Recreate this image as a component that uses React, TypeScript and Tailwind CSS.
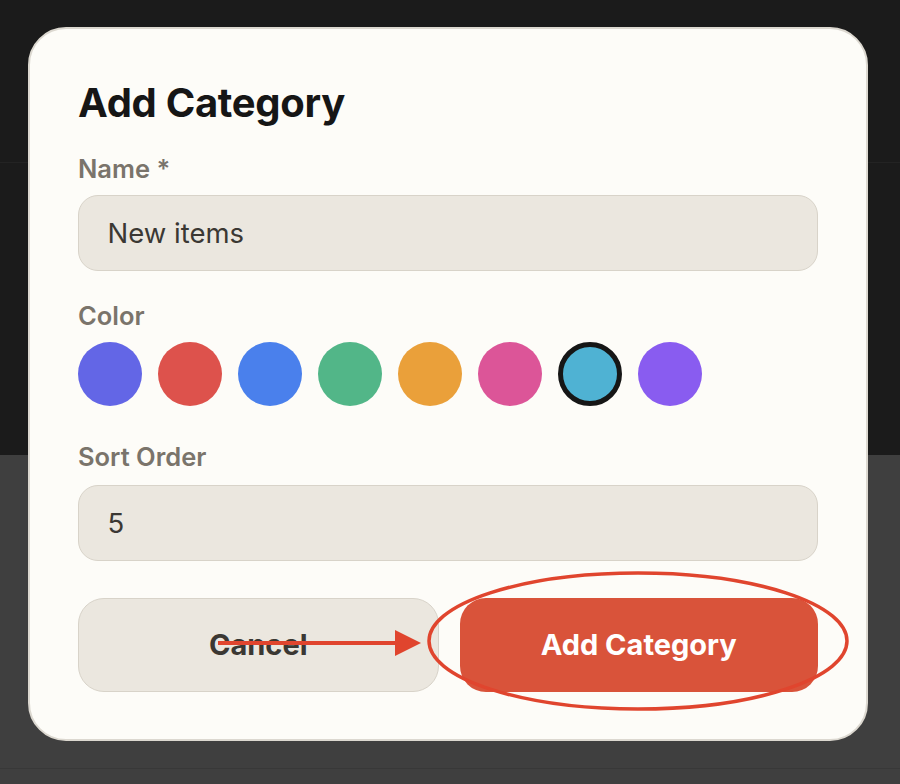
import React, { useState } from "react";

const COLORS = [
  "bg-[#6366e6]",
  "bg-[#dd524c]",
  "bg-[#4a80ec]",
  "bg-[#52b688]",
  "bg-[#eaa03a]",
  "bg-[#dc5598]",
  "bg-[#4fb2d3]",
  "bg-[#895cf0]",
];

export default function App() {
  const [selected, setSelected] = useState(6);
  const [name, setName] = useState("New items");
  const [order, setOrder] = useState("5");

  return (
    <div className="relative h-[784px] w-[900px] overflow-hidden font-['Inter','Liberation_Sans',sans-serif]">
      {/* page behind the dialog */}
      <div className="flex h-[455px] flex-col bg-[#1b1b1b]">
        <div className="h-[163px] border-b border-[#232323]" />
      </div>
      <div className="flex h-[329px] flex-col bg-[#3f3f3f]">
        <div className="h-[314px] border-b border-[#383838]" />
      </div>

      {/* dialog */}
      <div className="absolute left-[28px] top-[27px] flex h-[714px] w-[840px] flex-col rounded-[38px] border-2 border-[#dcd8d0] bg-[#fdfcf8] px-[48px] pt-[50px]">
        <h2 className="text-[40px] font-bold leading-[48px] tracking-[-0.3px] text-[#161616]">
          Add Category
        </h2>

        <label className="mt-[26px] text-[25.5px] font-semibold leading-[32px] text-[#7a746b]">
          Name *
        </label>
        <input
          value={name}
          onChange={(e) => setName(e.target.value)}
          className="mt-[10px] h-[76px] w-full rounded-[20px] border-[1.5px] border-[#d8d3c9] bg-[#ebe7df] px-[28.5px] text-[27.5px] text-[#3b3833] outline-none"
        />

        <label className="mt-[29px] text-[25.5px] font-semibold leading-[32px] text-[#7a746b]">
          Color
        </label>
        <div className="mt-[10px] flex gap-[16px]">
          {COLORS.map((c, i) => (
            <button
              key={c}
              onClick={() => setSelected(i)}
              className={`h-[64px] w-[64px] rounded-full ${c} ${
                i === selected ? "border-[5px] border-[#161616]" : ""
              }`}
            />
          ))}
        </div>

        <label className="mt-[35px] text-[25.5px] font-semibold leading-[32px] text-[#7a746b]">
          Sort Order
        </label>
        <input
          value={order}
          onChange={(e) => setOrder(e.target.value)}
          className="mt-[12px] h-[76px] w-full rounded-[20px] border-[1.5px] border-[#d8d3c9] bg-[#ebe7df] px-[28.5px] text-[27.5px] text-[#3b3833] outline-none"
        />

        <div className="mt-[37px] flex gap-[21px]">
          <button className="h-[94px] flex-1 rounded-[26px] border-[1.5px] border-[#d8d3c9] bg-[#ebe7df] text-[29px] font-bold text-[#3b3833]">
            Cancel
          </button>
          <button className="h-[94px] flex-1 rounded-[26px] bg-[#d9533a] text-[29px] font-bold text-white">
            Add Category
          </button>
        </div>
      </div>

      {/* annotation overlay */}
      <svg
        className="pointer-events-none absolute left-0 top-0"
        width="900"
        height="784"
        viewBox="0 0 900 784"
      >
        <ellipse
          cx="638"
          cy="641"
          rx="209"
          ry="68"
          fill="none"
          stroke="#e0452e"
          strokeWidth="3.5"
        />
        <line x1="218" y1="643" x2="400" y2="643" stroke="#e0452e" strokeWidth="4" />
        <polygon points="395,630 421,643 395,656" fill="#e0452e" />
      </svg>
    </div>
  );
}
